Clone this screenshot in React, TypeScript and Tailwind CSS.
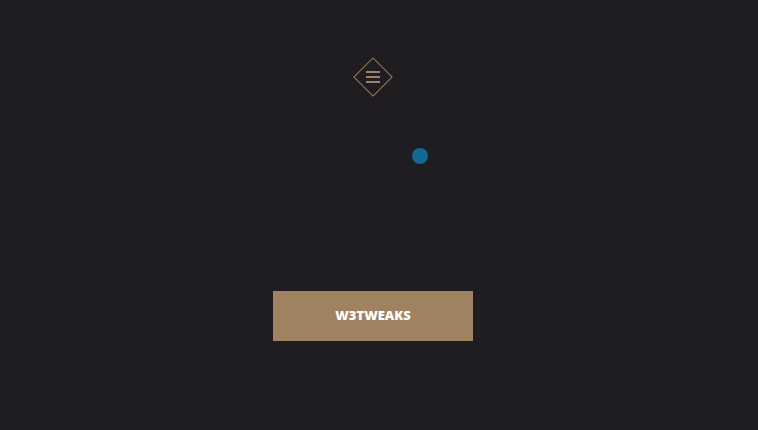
import React from 'react';

export default function App() {
  return (
    <div className="relative min-h-[430px] w-full overflow-hidden bg-[#1f1d22]" style={{ fontFamily: '"Open Sans", Inter, sans-serif' }}>
      {/* Header toggle */}
      <div className="flex w-[746px] flex-col items-center">
        <button className="mt-[63px] flex h-[28px] w-[28px] rotate-45 items-center justify-center border border-[#a08261] bg-transparent">
          <span className="flex -rotate-45 flex-col gap-[3px]">
            <span className="block h-[2px] w-[14px] bg-[#a08261]" />
            <span className="block h-[2px] w-[14px] bg-[#a08261]" />
            <span className="block h-[2px] w-[14px] bg-[#a08261]" />
          </span>
        </button>

        <button className="mt-[200px] flex h-[50px] w-[200px] items-center justify-center bg-[#a08261] text-[13px] font-extrabold text-white">
          W3TWEAKS
        </button>
      </div>

      {/* Cursor dot */}
      <div className="absolute left-[412px] top-[148px] h-[16px] w-[16px] rounded-full bg-[#0f6a94]" />
    </div>
  );
}
